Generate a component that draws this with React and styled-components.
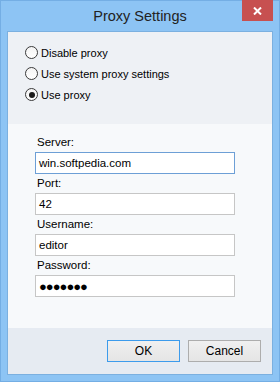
import styled, { createGlobalStyle } from 'styled-components';

const Global = createGlobalStyle`
  html, body { margin: 0; padding: 0; }
  body { font-family: "Liberation Sans", Arial, sans-serif; font-size: 11px; color: #000; }
`;

const Window = styled.div`
  width: 280px;
  height: 382px;
  box-sizing: border-box;
  background: #8dc4f4;
  border: 1px solid #74aee4;
  display: flex;
  flex-direction: column;
`;

const TitleBar = styled.div`
  height: 30px;
  display: flex;
  align-items: center;
  justify-content: center;
  position: relative;
  font-size: 14.5px;
  color: #222;
`;

const Close = styled.div`
  position: absolute;
  top: -1px;
  right: 6px;
  width: 31px;
  height: 21px;
  background: #c75050;
  display: flex;
  align-items: center;
  justify-content: center;
`;

const Client = styled.div`
  flex: 1;
  margin: 0 6px 6px 6px;
  border: 1px solid #7bb0e0;
  display: flex;
  flex-direction: column;
`;

const Options = styled.div`
  background: #eef1f5;
  height: 92px;
  box-sizing: border-box;
  padding: 14px 0 0 17px;
  display: flex;
  flex-direction: column;
  gap: 8px;
`;

const RadioRow = styled.label`
  display: flex;
  align-items: center;
  gap: 3px;
  height: 13px;
`;

const RadioCircle = styled.span`
  width: 11px;
  height: 11px;
  border-radius: 50%;
  border: 1px solid #3a3a3a;
  background: linear-gradient(#f4f4f4, #ffffff);
  display: flex;
  align-items: center;
  justify-content: center;
  &::after {
    content: '';
    width: 6px;
    height: 6px;
    border-radius: 50%;
    background: ${p => (p.checked ? '#1a1a1a' : 'transparent')};
  }
`;

const Form = styled.div`
  flex: 1;
  background: #f7f9fb;
  padding: 11px 0 0 27px;
  display: flex;
  flex-direction: column;
`;

const Label = styled.div`
  height: 15px;
  line-height: 15px;
  padding-left: 2px;
  margin-bottom: 2px;
  font-size: 11.5px;
`;

const Input = styled.div`
  width: 200px;
  height: 22px;
  box-sizing: border-box;
  background: #fff;
  border: 1px solid ${p => (p.focused ? '#6d9fd6' : '#c6c6c6')};
  padding-left: 3px;
  display: flex;
  align-items: center;
  margin-bottom: 2px;
  font-size: ${p => (p.secret ? '13px' : '11.5px')};
  letter-spacing: ${p => (p.secret ? '-1px' : '0')};
`;

const Footer = styled.div`
  height: 46px;
  background: #e6ebf2;
  display: flex;
  justify-content: flex-end;
  align-items: flex-start;
  padding: 12px 11px 0 0;
  gap: 8px;
  box-sizing: border-box;
`;

const Button = styled.div`
  width: 73px;
  height: 22px;
  box-sizing: border-box;
  border: 1px solid ${p => (p.primary ? '#3c9bec' : '#adadad')};
  background: linear-gradient(#f0f0f0, #e5e5e5);
  display: flex;
  align-items: center;
  justify-content: center;
  font-size: 12px;
`;

const Radio = ({ checked, children }) => (
  <RadioRow>
    <RadioCircle checked={checked} />
    {children}
  </RadioRow>
);

const Field = ({ label, value, focused, secret }) => (
  <>
    <Label>{label}</Label>
    <Input focused={focused} secret={secret}>{value}</Input>
  </>
);

const App = () => {
  return (
    <>
      <Global />
      <Window>
        <TitleBar>
          Proxy Settings
          <Close>
            <svg width="9" height="8" viewBox="0 0 9 8">
              <path d="M1 0.5 L8 7.5 M8 0.5 L1 7.5" stroke="#fff" strokeWidth="2" />
            </svg>
          </Close>
        </TitleBar>
        <Client>
          <Options>
            <Radio>Disable proxy</Radio>
            <Radio>Use system proxy settings</Radio>
            <Radio checked>Use proxy</Radio>
          </Options>
          <Form>
            <Field label="Server:" value="win.softpedia.com" focused />
            <Field label="Port:" value="42" />
            <Field label="Username:" value="editor" />
            <Field label="Password:" value="●●●●●●●" secret />
          </Form>
          <Footer>
            <Button primary>OK</Button>
            <Button>Cancel</Button>
          </Footer>
        </Client>
      </Window>
    </>
  );
};

export default App;
